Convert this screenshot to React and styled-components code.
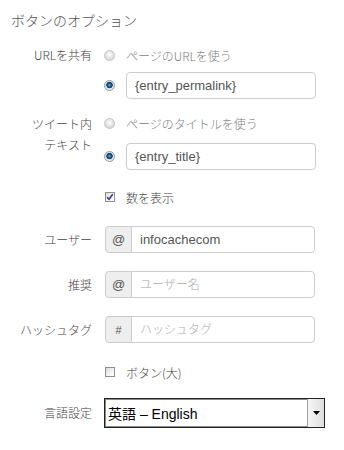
import React from 'react';
import styled, { createGlobalStyle } from 'styled-components';

const Global = createGlobalStyle`
  html, body { margin: 0; padding: 0; background: #fff; }
  body { font-family: "Noto Sans CJK JP", sans-serif; }
  * { box-sizing: border-box; }
`;

const Page = styled.div`
  width: 344px;
  height: 450px;
  padding-top: 10px;
  background: #fff;
`;

const Title = styled.h2`
  margin: 0 0 14px 0;
  padding-left: 11px;
  font-size: 14px;
  line-height: 21px;
  font-weight: 300;
  color: #555;
`;

const Group = styled.div`
  display: grid;
  grid-template-columns: 92px auto;
  column-gap: 12px;
  margin-top: ${p => p.$mt || 0}px;
  align-items: ${p => (p.$top ? 'start' : 'center')};
`;

const Label = styled.div`
  text-align: right;
  font-size: 12px;
  font-weight: 300;
  line-height: ${p => p.$lh || 20}px;
  color: #444;
`;

const Controls = styled.div`
  display: flex;
  flex-direction: column;
  gap: ${p => p.$gap || 0}px;
`;

const Line = styled.label`
  display: flex;
  align-items: center;
  gap: 11px;
  height: ${p => p.$h || 20}px;
  font-size: 12px;
  font-weight: 300;
  color: ${p => (p.$muted ? '#808080' : '#444')};
`;

const Radio = styled.span`
  flex: none;
  width: 11px;
  height: 11px;
  border-radius: 50%;
  border: 1px solid ${p => (p.$checked ? '#8c9aa8' : '#c4c4c4')};
  background: ${p =>
    p.$checked
      ? 'radial-gradient(circle at 50% 45%, #7fb0d4 0, #245f92 1.6px, #0f3658 2.9px, #d9e1e8 3.5px, #f2f4f6 5.5px)'
      : 'radial-gradient(circle at 50% 40%, #fcfcfc 0, #e8e8e8 3px, #d6d6d6 5.5px)'};
`;

const Box = styled.span`
  flex: none;
  width: 10px;
  height: 10px;
  margin-left: 1px;
  border: 1px solid #8f8f8f;
  background: linear-gradient(135deg, #d9d9d9 0%, #f4f4f4 60%, #ffffff 100%);
  display: flex;
  align-items: center;
  justify-content: center;
`;

const TextInput = styled.input`
  width: ${p => p.$w || 190}px;
  height: 27px;
  padding: 0 8px;
  border: 1px solid #ccc;
  border-radius: ${p => (p.$grouped ? '0 4px 4px 0' : '4px')};
  font-family: "Liberation Sans", "Noto Sans CJK JP", sans-serif;
  font-size: 13px;
  color: #555;
  background: #fff;
  outline: none;
  &::placeholder {
    color: #aaa;
    font-family: "Noto Sans CJK JP", sans-serif;
    font-weight: 300;
    font-size: 12px;
  }
`;

const InputGroup = styled.div`
  display: flex;
  width: 210px;
  margin-left: 1px;
`;

const Addon = styled.span`
  flex: none;
  width: 27px;
  height: 27px;
  display: flex;
  align-items: center;
  justify-content: center;
  border: 1px solid #ccc;
  border-radius: 4px 0 0 4px;
  background: #eee;
  color: #555;
  font-family: "Liberation Sans", sans-serif;
  font-size: ${p => (p.$small ? 11 : 13)}px;
  margin-right: -1px;
`;

const Select = styled.div`
  display: flex;
  align-items: stretch;
  width: 221px;
  height: 30px;
  border: 1px solid #222;
  box-shadow: inset 0 0 0 1px #8a8a8a;
  background: #fff;
`;

const SelectText = styled.span`
  flex: 1;
  display: flex;
  align-items: center;
  padding-left: 3px;
  font-family: "Liberation Sans", "Noto Sans CJK JP", sans-serif;
  font-size: 14px;
  color: #000;
`;

const Arrow = styled.span`
  flex: none;
  width: 17px;
  border-left: 1px solid #a0a0a0;
  background: linear-gradient(to right, #f6f6f6, #dedede);
  display: flex;
  align-items: center;
  justify-content: center;
`;

const Check = () => (
  <svg width="8" height="8" viewBox="0 0 8 8">
    <path d="M1.2 4.2 L3 6.2 L6.8 1.2" fill="none" stroke="#2b3b8f" strokeWidth="1.5" />
  </svg>
);

export default function App() {
  return (
    <Page>
      <Global />
      <Title>ボタンのオプション</Title>

      <Group $top>
        <Label>URLを共有</Label>
        <Controls $gap={7}>
          <Line $muted>
            <Radio />
            ページのURLを使う
          </Line>
          <Line $h={27}>
            <Radio $checked />
            <TextInput readOnly value="{entry_permalink}" />
          </Line>
        </Controls>
      </Group>

      <Group $top $mt={14}>
        <Label $lh={21}>
          ツイート内
          <br />
          テキスト
        </Label>
        <Controls $gap={10}>
          <Line $muted>
            <Radio />
            ページのタイトルを使う
          </Line>
          <Line $h={27}>
            <Radio $checked />
            <TextInput readOnly value="{entry_title}" />
          </Line>
        </Controls>
      </Group>

      <Group $mt={17}>
        <span />
        <Line>
          <Box>
            <Check />
          </Box>
          数を表示
        </Line>
      </Group>

      <Group $mt={19}>
        <Label>ユーザー</Label>
        <InputGroup>
          <Addon>@</Addon>
          <TextInput $grouped $w={184} readOnly value="infocachecom" />
        </InputGroup>
      </Group>

      <Group $mt={18}>
        <Label>推奨</Label>
        <InputGroup>
          <Addon>@</Addon>
          <TextInput $grouped $w={184} readOnly placeholder="ユーザー名" />
        </InputGroup>
      </Group>

      <Group $mt={18}>
        <Label>ハッシュタグ</Label>
        <InputGroup>
          <Addon $small>#</Addon>
          <TextInput $grouped $w={184} readOnly placeholder="ハッシュタグ" />
        </InputGroup>
      </Group>

      <Group $mt={19}>
        <span />
        <Line>
          <Box />
          ボタン(大)
        </Line>
      </Group>

      <Group $mt={16}>
        <Label>言語設定</Label>
        <Select>
          <SelectText>英語 – English</SelectText>
          <Arrow>
            <svg width="7" height="4" viewBox="0 0 7 4">
              <path d="M0 0 H7 L3.5 4 Z" fill="#000" />
            </svg>
          </Arrow>
        </Select>
      </Group>
    </Page>
  );
}
